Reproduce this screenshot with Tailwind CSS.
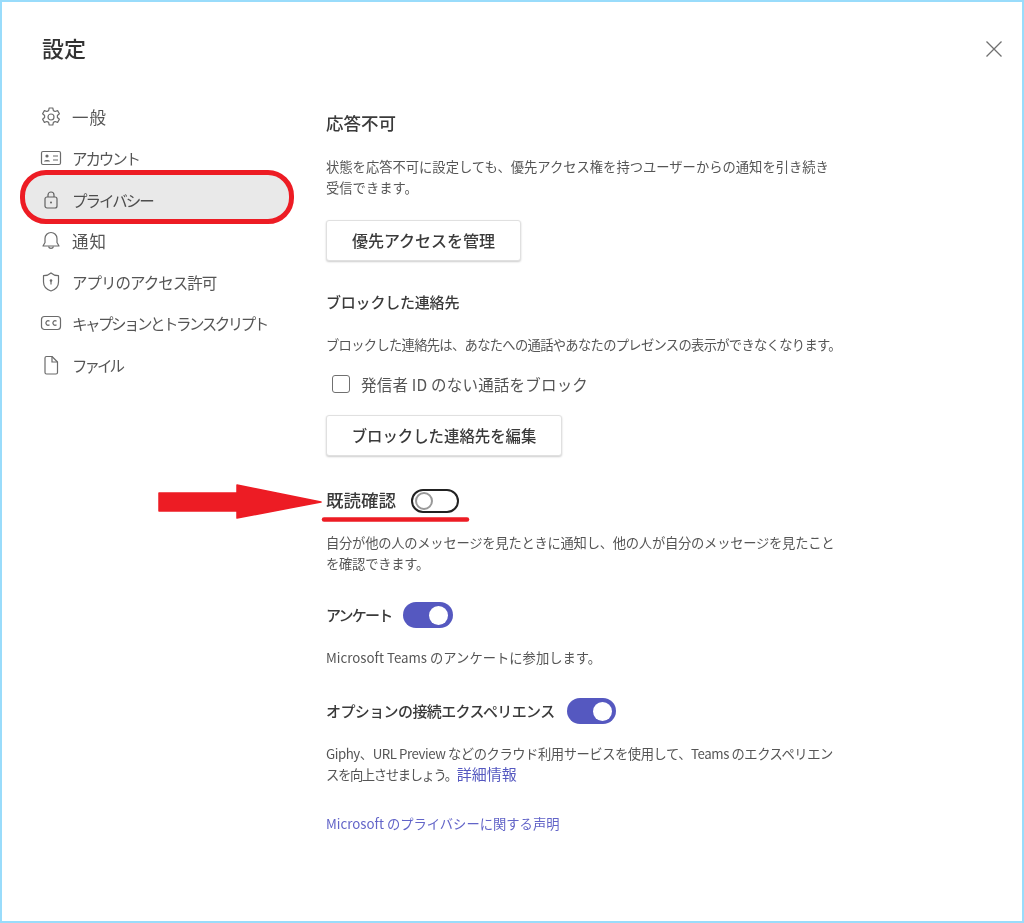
<!doctype html>
<html lang="ja">
<head>
  <meta charset="UTF-8">
  <script src="https://cdn.jsdelivr.net/npm/@tailwindcss/browser@4"></script>
</head>
<body class="bg-white">
  <div class="relative w-[1024px] h-[923px] overflow-hidden bg-white border-2 border-[#99dcfb] font-['Noto_Sans_CJK_JP','Noto_Sans',sans-serif] text-[#424242]">
    <div class="blur-[0.4px]">
    <!-- header -->
    <div class="flex items-center justify-between pl-[40px] pr-[19px] pt-[33px] h-[60px]">
      <h1 class="text-[22px] leading-[30px] font-medium text-[#333] mb-[4px]">設定</h1>
      <svg class="w-[18px] h-[18px] text-[#707070]" viewBox="0 0 18 18" fill="none" stroke="currentColor" stroke-width="1.3"><path d="M1.5 1.5l15 15M16.500 1.500l-15 15"/></svg>
    </div>

    <div class="flex pt-[35px]">
      <!-- sidebar -->
      <nav class="w-[324px] shrink-0 pl-[38px] pt-[10px] flex flex-col gap-[21.3px] text-[15.5px] leading-[20px] text-[#555]">
        <a class="flex items-center gap-[10px] h-[20px]">
          <svg class="w-[22px] h-[22px] shrink-0" viewBox="0 0 22 22" fill="none" stroke="#6b6b6b" stroke-width="1.2"><path d="M9.200 2h3.600l.6 2.600 1.700.9 2.500-.9 1.800 3.100-2 1.800v2l2 1.800-1.800 3.100-2.500-.9-1.700.9-.6 2.600H9.200l-.6-2.600-1.700-.9-2.500.9-1.800-3.100 2-1.800v-2l-2-1.800 1.800-3.100 2.500.9 1.700-.9z" stroke-linejoin="round"/><circle cx="11" cy="11" r="3"/></svg>
          <span class="text-[16.5px] tracking-[1px]">一般</span>
        </a>
        <a class="flex items-center gap-[10px] h-[20px]">
          <svg class="w-[22px] h-[22px] shrink-0" viewBox="0 0 22 22" fill="none" stroke="#6b6b6b" stroke-width="1.2"><rect x="1.500" y="4.500" width="19" height="13" rx="1.500"/><circle cx="7" cy="9" r="1.600" fill="#6b6b6b" stroke="none"/><path d="M4 14.500c0-2 6-2 6 0z" fill="#6b6b6b" stroke="none"/><path d="M13 9h5M13 13h5"/></svg>
          <span class="tracking-[-2.1px]">アカウント</span>
        </a>
        <a class="flex items-center gap-[10px] h-[20px]">
          <svg class="w-[22px] h-[22px] shrink-0" viewBox="0 0 22 22" fill="none" stroke="#6b6b6b" stroke-width="1.2"><rect x="5" y="8" width="12" height="11" rx="2"/><path d="M8 8V6a3 3 0 0 1 6 0v2"/><circle cx="11" cy="13.500" r="1" fill="#6b6b6b" stroke="none"/></svg>
          <span class="tracking-[-2px]">プライバシー</span>
        </a>
        <a class="flex items-center gap-[10px] h-[20px]">
          <svg class="w-[22px] h-[22px] shrink-0" viewBox="0 0 22 22" fill="none" stroke="#6b6b6b" stroke-width="1.2"><path d="M11 2.500a6 6 0 0 0-6 6v4l-2 3.500h16l-2-3.500v-4a6 6 0 0 0-6-6z" stroke-linejoin="round"/><path d="M8.500 16.500a2.600 2.600 0 0 0 5 0"/></svg>
          <span class="text-[16.5px] tracking-[1px]">通知</span>
        </a>
        <a class="flex items-center gap-[10px] h-[20px]">
          <svg class="w-[22px] h-[22px] shrink-0" viewBox="0 0 22 22" fill="none" stroke="#6b6b6b" stroke-width="1.2"><path d="M11 2c2 1.800 4.500 2.700 7.500 2.700V11c0 4.500-3 7.500-7.500 9-4.500-1.500-7.500-4.500-7.500-9V4.700C6.500 4.700 9 3.800 11 2z" stroke-linejoin="round"/><circle cx="11" cy="9.500" r="1.300" fill="#6b6b6b" stroke="none"/><path d="M11 10v3.500"/></svg>
          <span class="tracking-[-1px]">アプリのアクセス許可</span>
        </a>
        <a class="flex items-center gap-[10px] h-[20px]">
          <svg class="w-[22px] h-[22px] shrink-0" viewBox="0 0 22 22" fill="none" stroke="#6b6b6b" stroke-width="1.2"><rect x="1.500" y="4.500" width="19" height="13" rx="3"/><path d="M9.500 9.300a2.200 2.200 0 1 0 0 3.400M16.500 9.300a2.200 2.200 0 1 0 0 3.400"/></svg>
          <span class="tracking-[-2.5px] whitespace-nowrap">キャプションとトランスクリプト</span>
        </a>
        <a class="flex items-center gap-[10px] h-[20px]">
          <svg class="w-[22px] h-[22px] shrink-0" viewBox="0 0 22 22" fill="none" stroke="#6b6b6b" stroke-width="1.2"><path d="M5 4a1.500 1.500 0 0 1 1.500-1.500H12L17.500 8v10.500A1.500 1.500 0 0 1 16 20H6.500A1.500 1.500 0 0 1 5 18.500z" stroke-linejoin="round"/><path d="M12 2.500V8h5.500"/></svg>
          <span class="tracking-[-3px]">ファイル</span>
        </a>
      </nav>

      <!-- main -->
      <main class="w-[515px] pt-[15px] text-[13.3px] leading-[21px] text-[#555]">
        <h2 class="text-[17.5px] leading-[24px] font-medium text-[#3a3a3a] -translate-y-[1px]">応答不可</h2>
        <p class="mt-[20px]">状態を応答不可に設定しても、優先アクセス権を持つユーザーからの通知を引き続き受信できます。</p>
        <button class="block mt-[22px] w-[195px] h-[41px] bg-white rounded-[3px] border border-[#e0e0e0] shadow-[0_1px_2px_rgba(0,0,0,0.2)] text-[16px] font-medium text-[#3a3a3a]">優先アクセスを管理</button>

        <h2 class="mt-[30px] text-[15px] leading-[24px] tracking-[-0.2px] font-medium text-[#3a3a3a] -translate-y-[1px]">ブロックした連絡先</h2>
        <p class="mt-[19px] whitespace-nowrap tracking-[-0.7px]">ブロックした連絡先は、あなたへの通話やあなたのプレゼンスの表示ができなくなります。</p>
        <label class="mt-[18px] ml-[6px] flex items-center gap-[11px] h-[22px] text-[15.5px] tracking-[0.2px] whitespace-nowrap">
          <span class="w-[18px] h-[18px] rounded-[3px] border-[1.5px] border-[#707070]"></span>
          発信者 ID のない通話をブロック
        </label>
        <button class="block mt-[20px] w-[236px] h-[41px] bg-white rounded-[3px] border border-[#e0e0e0] shadow-[0_1px_2px_rgba(0,0,0,0.2)] text-[15.4px] font-medium text-[#3a3a3a]">ブロックした連絡先を編集</button>

        <div class="mt-[32px] flex items-center gap-[15px] h-[26px]">
          <h2 class="text-[17.5px] font-medium text-[#3a3a3a] -translate-y-[2px]">既読確認</h2>
          <span class="flex items-center w-[48px] h-[24px] rounded-full border-2 border-[#222] bg-white pl-[2px]">
            <span class="w-[18px] h-[18px] rounded-full border-2 border-[#999] bg-white"></span>
          </span>
        </div>
        <p class="mt-[18px] tracking-[-0.25px]">自分が他の人のメッセージを見たときに通知し、他の人が自分のメッセージを見たことを確認できます。</p>

        <div class="mt-[28px] flex items-center gap-[12px] h-[26px]">
          <h2 class="text-[15px] tracking-[-1.8px] font-medium text-[#3a3a3a] -translate-y-[1px]">アンケート</h2>
          <span class="flex items-center justify-end w-[50px] h-[26px] rounded-full bg-[#5558c0] pr-[5px]">
            <span class="w-[19px] h-[19px] rounded-full bg-white"></span>
          </span>
        </div>
        <p class="mt-[19px]">Microsoft Teams のアンケートに参加します。</p>

        <div class="mt-[30px] flex items-center gap-[12px] h-[26px]">
          <h2 class="text-[15px] tracking-[-0.6px] font-medium text-[#3a3a3a] -translate-y-[1px]">オプションの接続エクスペリエンス</h2>
          <span class="flex items-center justify-end w-[49px] h-[26px] rounded-full bg-[#5558c0] pr-[4px]">
            <span class="w-[19px] h-[19px] rounded-full bg-white"></span>
          </span>
        </div>
        <p class="mt-[19px] tracking-[-0.45px]">Giphy、URL Preview などのクラウド利用サービスを使用して、Teams のエクスペリエン<span class="tracking-[-1.35px]">スを向上させましょう。</span><a class="text-[15px] leading-none tracking-normal text-[#5558c0]">詳細情報</a></p>
        <a class="block mt-[28px] text-[#6264c8]">Microsoft のプライバシーに関する声明</a>
      </main>
    </div>

    <!-- hand-drawn red annotations -->
    <div class="absolute left-[18px] top-[168px] w-[274px] h-[54px] rounded-[26px] bg-[#e9e9e9] border-[5px] border-[#ed1c24] mix-blend-multiply"></div>
    <svg class="absolute left-[156px] top-[482px] w-[316px] h-[42px]" viewBox="0 0 316 42">
      <path d="M1 9h78V1l84 17-84 16v-7H1z" fill="#ed1c24" stroke="#ed1c24" stroke-linejoin="round" stroke-width="1.5"/>
      <path d="M166 35.500h143" stroke="#ed1c24" stroke-width="4.5" stroke-linecap="round"/>
    </svg>
    </div>
  </div>
</body>
</html>
